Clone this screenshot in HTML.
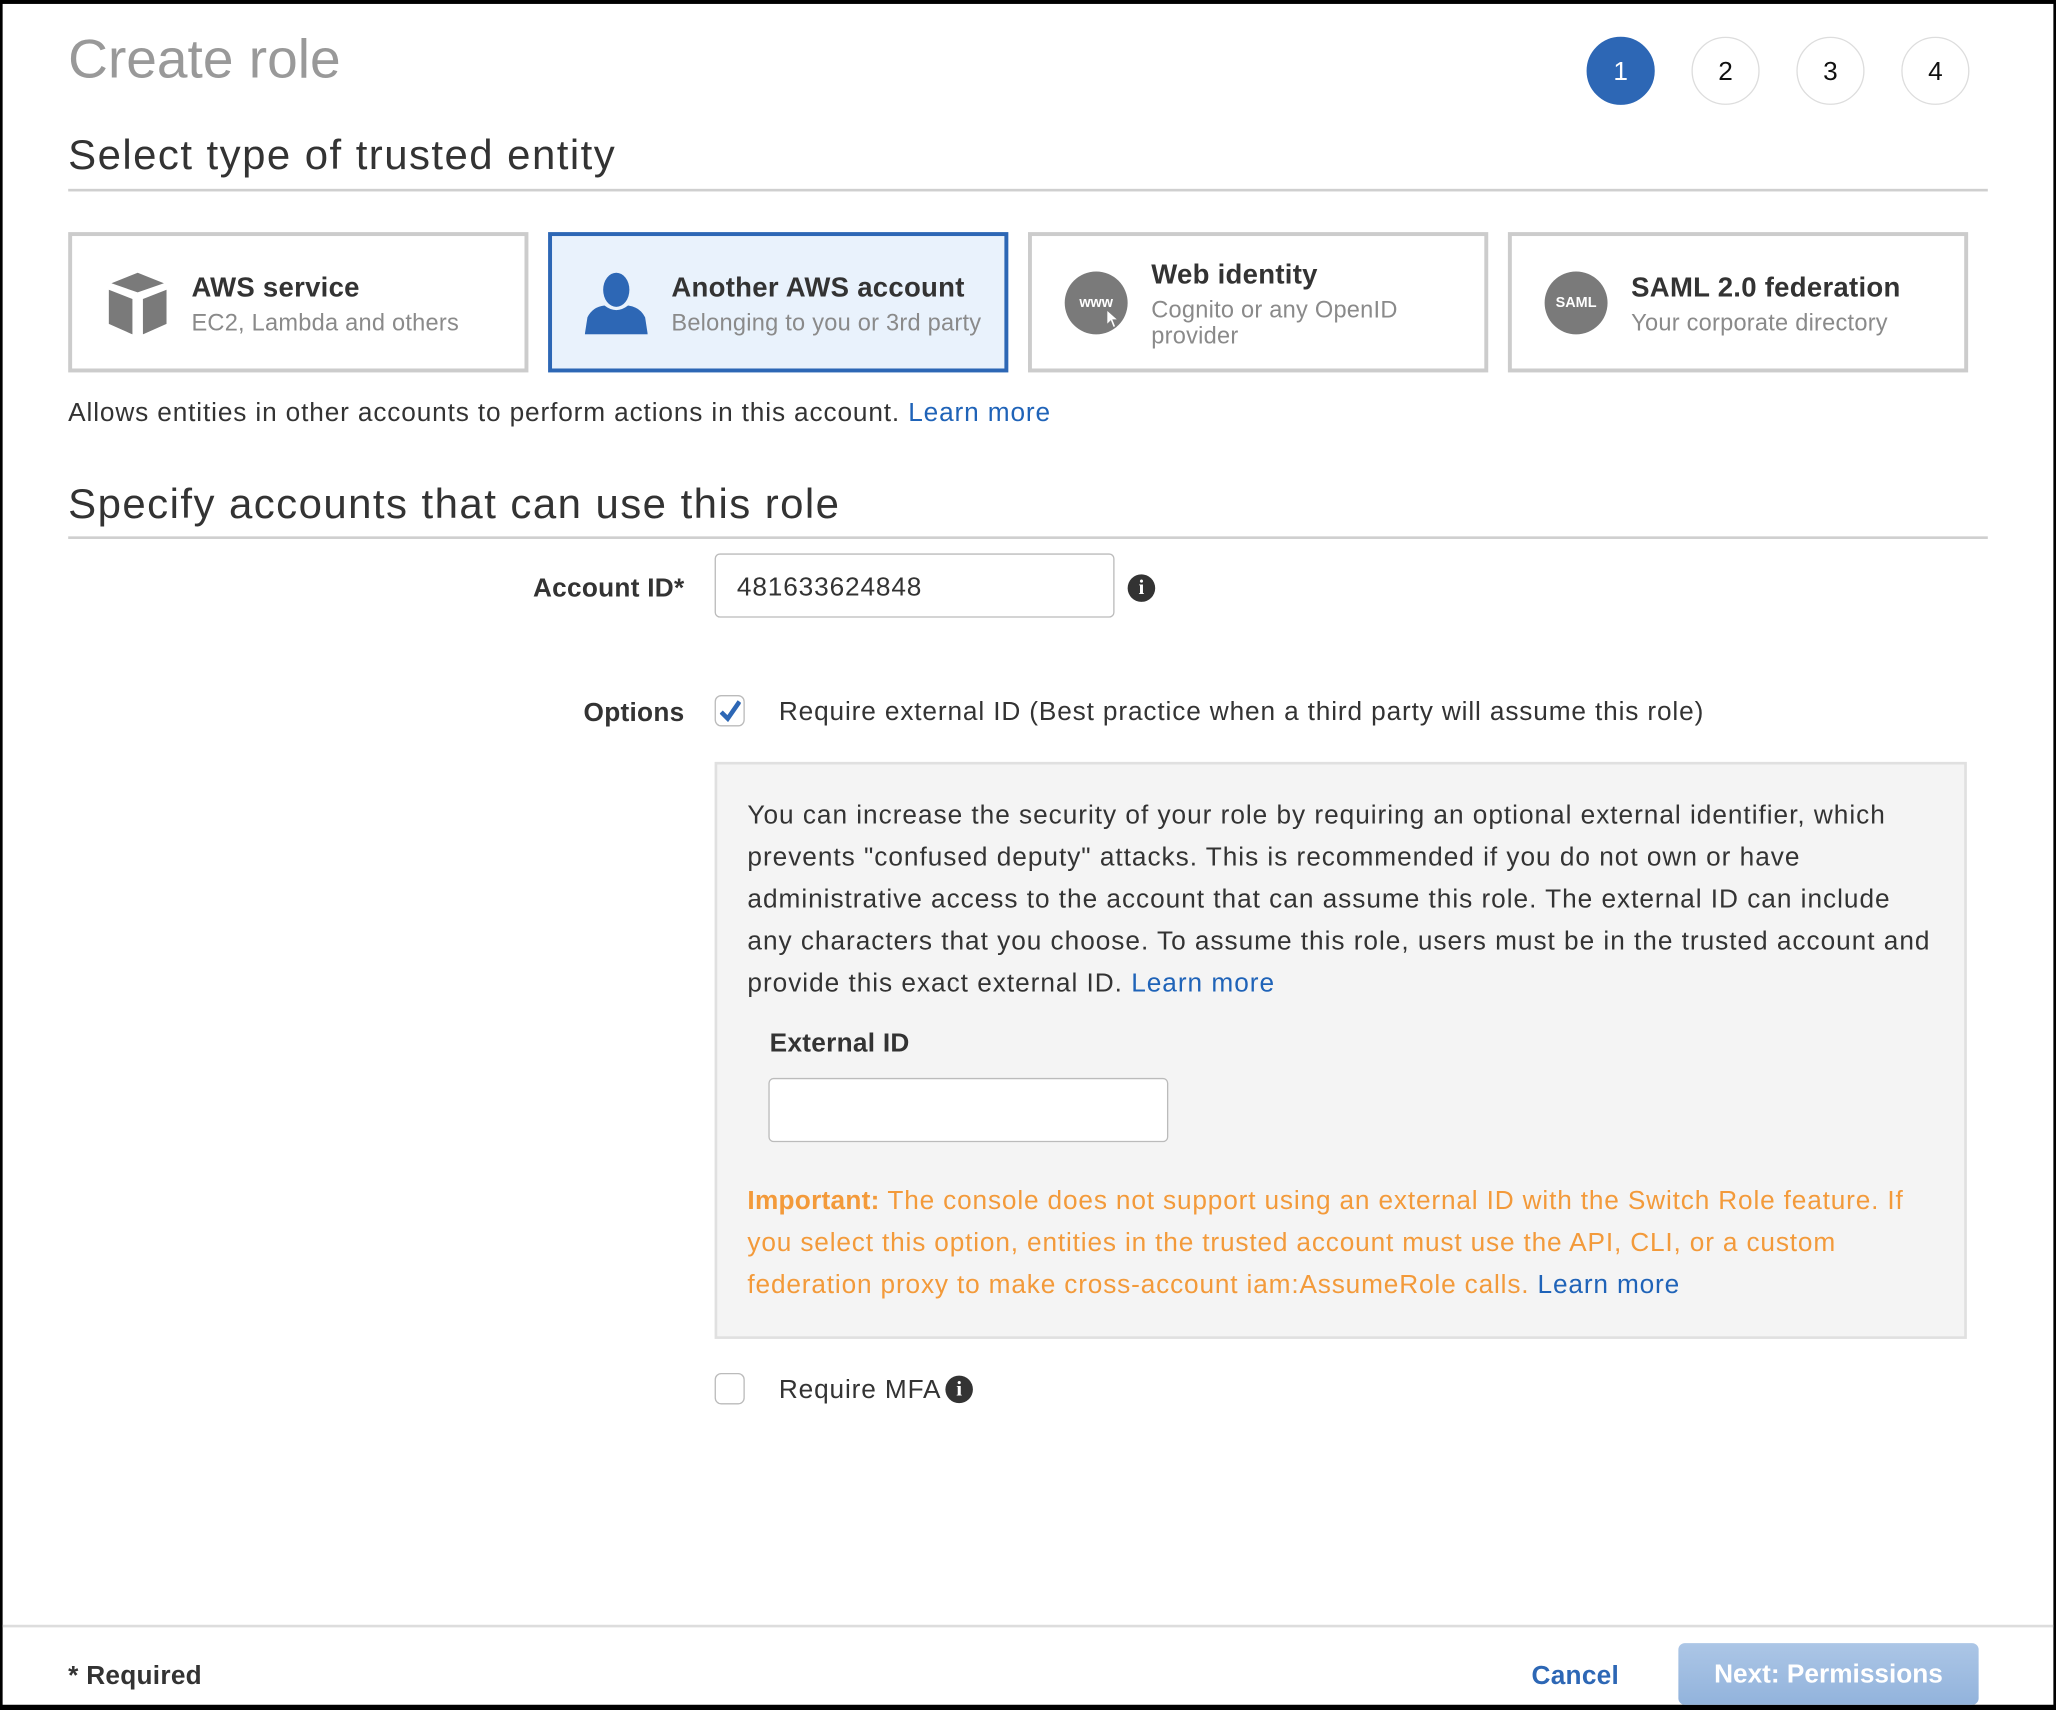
<!DOCTYPE html>
<html><head><meta charset="utf-8"><style>
html,body{margin:0;padding:0;width:2056px;height:1710px;overflow:hidden;background:#000;}
#w{position:absolute;left:0;top:0;width:1568px;height:1304px;transform:scale(1.31122,1.31135);transform-origin:0 0;font-family:"Liberation Sans",Arial,sans-serif;color:#333;letter-spacing:0.041em;}
#pg{position:absolute;left:2px;top:3px;width:1564px;height:1297px;background:#fff;}
.a{position:absolute;white-space:nowrap;}
.hr{position:absolute;height:2px;background:#cfcfcf;}
.step{position:absolute;top:28px;width:52px;height:52px;border-radius:50%;border:1px solid #ddd;box-sizing:border-box;text-align:center;line-height:52px;font-size:20px;color:#111;letter-spacing:0;}
.card{position:absolute;top:177px;width:351px;height:107px;border:3px solid #ccc;box-sizing:border-box;}
.ct{position:absolute;font-size:21px;font-weight:bold;color:#333;white-space:nowrap;letter-spacing:0.01em;}
.cs{position:absolute;font-size:18px;color:#8a8a8a;white-space:nowrap;line-height:20px;letter-spacing:0.01em;}
.ic{position:absolute;width:48px;height:48px;border-radius:50%;background:#7a7a7a;color:#fff;font-size:11px;font-weight:bold;text-align:center;line-height:48px;letter-spacing:0;}
.lnk{color:#1f63b8;}
.p{font-size:20px;line-height:32px;}
.info{position:absolute;width:21px;height:21px;border-radius:50%;background:#333;color:#fff;font-family:"Liberation Serif",serif;font-weight:bold;font-size:16px;text-align:center;line-height:21px;letter-spacing:0;}
.inp{position:absolute;border:1px solid #bbb;border-radius:4px;background:#fff;box-sizing:border-box;}
.cb{position:absolute;width:23px;height:24px;border:1px solid #bbb;border-radius:5px;box-sizing:border-box;background:#fff;}
</style></head><body><div id="w"><div id="pg"></div>
<div class="a" style="left:52px;top:21px;font-size:42px;color:#999;letter-spacing:0;">Create role</div>
<div class="step" style="left:1210px;background:#2d67b5;border-color:#2d67b5;color:#fff;">1</div>
<div class="step" style="left:1290px;">2</div>
<div class="step" style="left:1370px;">3</div>
<div class="step" style="left:1450px;">4</div>
<div class="a" style="left:52px;top:100px;font-size:32px;color:#333;letter-spacing:1.1px;">Select type of trusted entity</div>
<div class="hr" style="left:52px;top:144px;width:1464px;"></div>

<div class="card" style="left:52px;">
 <svg style="position:absolute;left:26px;top:27px" width="48" height="48" viewBox="0 0 48 48"><polygon points="24,1 44,9 24,16 4,9" fill="#7a7a7a"/><polygon points="2,14 20,21 20,48 2,40" fill="#7a7a7a"/><polygon points="28,21 46,14 46,40 28,48" fill="#7a7a7a"/></svg>
 <div class="ct" style="left:91px;top:28px;">AWS service</div>
 <div class="cs" style="left:91px;top:56px;">EC2, Lambda and others</div>
</div>
<div class="card" style="left:418px;border-color:#2d67b5;background:#e9f2fc;">
 <svg style="position:absolute;left:25px;top:27px" width="48" height="48" viewBox="0 0 48 48"><ellipse cx="24" cy="14" rx="10" ry="13" fill="#2d67b5"/><path d="M0,48 L2,35 Q6,27 15,26 Q24,33 33,26 Q42,27 46,35 L48,48 Z" fill="#2d67b5"/></svg>
 <div class="ct" style="left:91px;top:28px;">Another AWS account</div>
 <div class="cs" style="left:91px;top:56px;">Belonging to you or 3rd party</div>
</div>
<div class="card" style="left:784px;">
 <div class="ic" style="left:25px;top:27px;">www</div>
 <svg style="position:absolute;left:56px;top:55px" width="12" height="16" viewBox="0 0 12 16"><path d="M1,1 L1,13 L4,10 L6,15 L8,14 L6,9 L10,9 Z" fill="#fff" stroke="#7a7a7a" stroke-width="1"/></svg>
 <div class="ct" style="left:91px;top:18px;">Web identity</div>
 <div class="cs" style="left:91px;top:46px;">Cognito or any OpenID<br>provider</div>
</div>
<div class="card" style="left:1150px;">
 <div class="ic" style="left:25px;top:27px;">SAML</div>
 <div class="ct" style="left:91px;top:28px;">SAML 2.0 federation</div>
 <div class="cs" style="left:91px;top:56px;">Your corporate directory</div>
</div>

<div class="a p" style="left:52px;top:299px;">Allows entities in other accounts to perform actions in this account. <span class="lnk">Learn more</span></div>
<div class="a" style="left:52px;top:366px;font-size:32px;letter-spacing:1.1px;">Specify accounts that can use this role</div>
<div class="hr" style="left:52px;top:409px;width:1464px;"></div>

<div class="a" style="right:1046px;top:438px;font-size:20px;font-weight:bold;letter-spacing:0.01em;">Account ID*</div>
<div class="inp" style="left:545px;top:422px;width:305px;height:49px;"></div>
<div class="a" style="left:562px;top:437px;font-size:20px;">481633624848</div>
<div class="info" style="left:860px;top:438px;">i</div>

<div class="a" style="right:1046px;top:533px;font-size:20px;font-weight:bold;letter-spacing:0.01em;">Options</div>
<div class="cb" style="left:545px;top:530px;"></div>
<svg style="position:absolute;left:549px;top:533px" width="16" height="18" viewBox="0 0 16 18"><path d="M1,10 L6,15 L15,2" fill="none" stroke="#2d67b5" stroke-width="3.5"/></svg>
<div class="a" style="left:594px;top:532px;font-size:20px;">Require external ID (Best practice when a third party will assume this role)</div>

<div style="position:absolute;left:545px;top:581px;width:955px;height:440px;background:#f4f4f4;border:2px solid #e0e0e0;box-sizing:border-box;"></div>
<div class="a p" style="left:570px;top:606px;letter-spacing:0.037em;">You can increase the security of your role by requiring an optional external identifier, which<br>prevents "confused deputy" attacks. This is recommended if you do not own or have<br>administrative access to the account that can assume this role. The external ID can include<br>any characters that you choose. To assume this role, users must be in the trusted account and<br>provide this exact external ID. <span class="lnk">Learn more</span></div>
<div class="a" style="left:587px;top:785px;font-size:20px;font-weight:bold;letter-spacing:0.01em;">External ID</div>
<div class="inp" style="left:586px;top:822px;width:305px;height:49px;"></div>
<div class="a p" style="left:570px;top:900px;color:#f39a3a;letter-spacing:0.032em;"><b style="letter-spacing:0.01em">Important:</b> The console does not support using an external ID with the Switch Role feature. If<br>you select this option, entities in the trusted account must use the API, CLI, or a custom<br>federation proxy to make cross-account iam:AssumeRole calls. <span class="lnk">Learn more</span></div>

<div class="cb" style="left:545px;top:1047px;"></div>
<div class="a" style="left:594px;top:1049px;font-size:20px;">Require MFA</div>
<div class="info" style="left:721px;top:1049px;">i</div>

<div style="position:absolute;left:2px;top:1239px;width:1564px;height:2px;background:#ddd;"></div>
<div class="a" style="left:52px;top:1267px;font-size:20px;font-weight:bold;letter-spacing:0.01em;">* Required</div>
<div class="a" style="left:1168px;top:1267px;font-size:20px;font-weight:bold;color:#2d67b5;letter-spacing:0.01em;">Cancel</div>
<div style="position:absolute;left:1280px;top:1253px;width:229px;height:47px;border-radius:5px;background:linear-gradient(#acc6e6,#92b3dc);color:#fff;font-size:20px;font-weight:bold;text-align:center;line-height:49px;letter-spacing:0;">Next: Permissions</div>
</div></body></html>
